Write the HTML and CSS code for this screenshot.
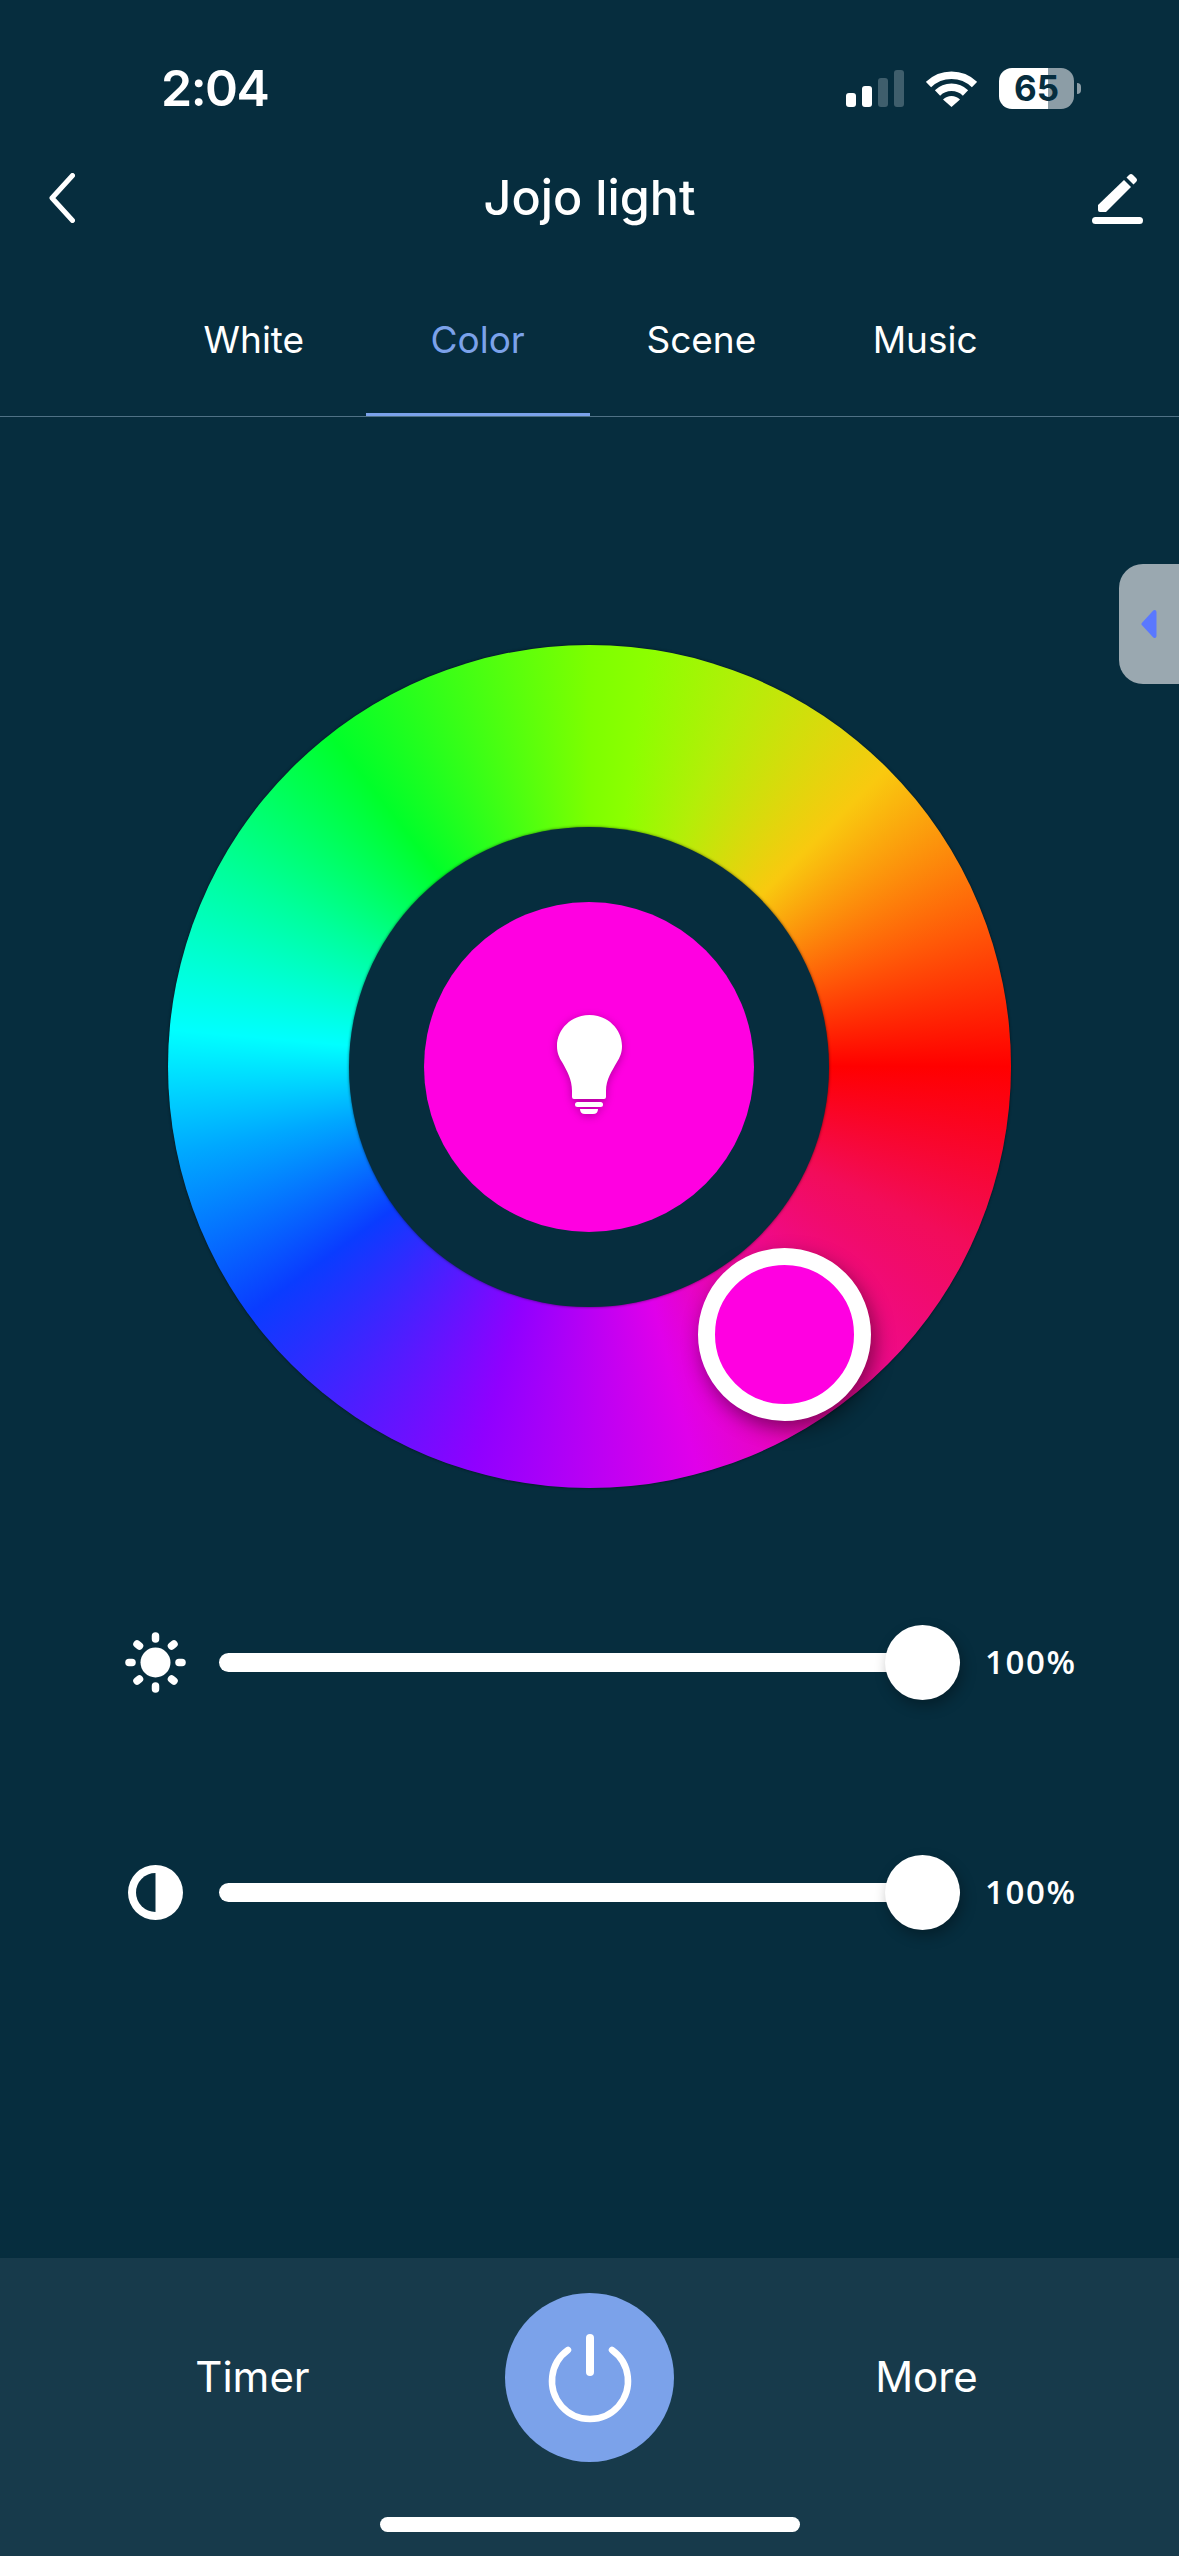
FILE: index.html
```html
<!DOCTYPE html>
<html lang="en">
<head>
    <meta charset="UTF-8">
    <meta name="viewport" content="width=device-width, initial-scale=1.0">
    <title>Jojo light</title>
    <link rel="stylesheet" href="styles.css">
</head>
<body>
    <div class="status-bar">
        <span class="time">2:04</span>
        <div class="status-icons">
            <div class="signal">
                <span class="bar bar-1"></span>
                <span class="bar bar-2"></span>
                <span class="bar bar-3"></span>
                <span class="bar bar-4"></span>
            </div>
            <svg class="wifi" width="51" height="37" viewBox="0 0 51 37">
                <path d="M2.5 14.5 A33 33 0 0 1 48.5 14.5" fill="none" stroke="#fff" stroke-width="7.5"/>
                <path d="M11.5 23 A20 20 0 0 1 39.5 23" fill="none" stroke="#fff" stroke-width="7.5"/>
                <path d="M17 29.5 A12 12 0 0 1 34 29.5 L25.5 37 Z" fill="#fff"/>
            </svg>
            <div class="battery">
                <div class="battery-body"><span class="battery-level">65</span></div>
                <span class="battery-cap"></span>
            </div>
        </div>
    </div>

    <div class="nav">
        <svg class="back" width="26" height="50" viewBox="0 0 26 50">
            <path d="M23.5 2.5 L3 25 L23.5 47.5" fill="none" stroke="#fff" stroke-width="5" stroke-linecap="round" stroke-linejoin="round"/>
        </svg>
        <h1 class="title">Jojo light</h1>
        <svg class="edit" width="51" height="51" viewBox="0 0 51 51">
            <path d="M6 32 L32 7 L39 14 L14 39 H8 Q6 39 6 37 Z" fill="#fff"/>
            <path d="M34.5 4.5 L37 2 Q39 0 41 2 L44 5 Q46 7 44 9 L41.5 11.5 Z" fill="#fff"/>
            <rect x="0" y="44" width="51" height="7" rx="3.5" fill="#fff"/>
        </svg>
    </div>

    <div class="tabs">
        <div class="tab">White</div>
        <div class="tab active">Color</div>
        <div class="tab">Scene</div>
        <div class="tab">Music</div>
    </div>

    <div class="content">
        <div class="side-tab">
            <svg width="16" height="30" viewBox="0 0 16 30">
                <path d="M13.5 3 L2.5 15 L13.5 27 Z" fill="#5a78ff" stroke="#5a78ff" stroke-width="4" stroke-linejoin="round"/>
            </svg>
        </div>

        <div class="wheel">
            <div class="wheel-hole">
                <div class="wheel-center">
                    <svg class="bulb" width="65" height="99" viewBox="0 0 65 99">
                        <path d="M32.5 0 C14.5 0 0 14 0 31 C0 38 2 42 5 47 C10 56 15 64 15 76 V82 Q15 84 17 84 H47 Q49 84 49 82 V76 C49 64 55 56 60 47 C63 42 65 38 65 31 C65 14 50.500 0 32.5 0 Z" fill="#fff"/>
                        <rect x="18" y="87" width="28" height="5" rx="2.5" fill="#fff"/>
                        <path d="M23 94 H41 Q41 99 36 99 H28 Q23 99 23 94 Z" fill="#fff"/>
                    </svg>
                </div>
            </div>
            <div class="wheel-handle"></div>
        </div>

        <div class="slider slider-brightness">
            <div class="slider-icon">
                <svg width="61" height="61" viewBox="0 0 61 61">
                    <circle cx="30.5" cy="30.5" r="15" fill="#fff"/>
                    <g stroke="#fff" stroke-width="7.500" stroke-linecap="round">
                        <path d="M30.500 4 V7"/>
                        <path d="M30.500 54 V57"/>
                        <path d="M4 30.500 H7"/>
                        <path d="M54 30.500 H57"/>
                        <path d="M12 12 L14.500 14"/>
                        <path d="M46.500 47 L49 49"/>
                        <path d="M12 49 L14.500 47"/>
                        <path d="M46.500 14 L49 12"/>
                    </g>
                </svg>
            </div>
            <div class="track"><span class="thumb"></span></div>
            <span class="slider-value">100%</span>
        </div>

        <div class="slider slider-contrast">
            <div class="slider-icon">
                <svg width="55" height="55" viewBox="0 0 55 55">
                    <circle cx="27.500" cy="27.500" r="27.500" fill="#fff"/>
                    <path d="M27.500 8 A19.500 19.500 0 0 0 27.500 47 Z" fill="#062d3e"/>
                </svg>
            </div>
            <div class="track"><span class="thumb"></span></div>
            <span class="slider-value">100%</span>
        </div>
    </div>

    <div class="bottom-bar">
        <div class="bottom-row">
            <span class="bottom-label">Timer</span>
            <div class="power">
                <svg width="96" height="96" viewBox="0 0 96 96">
                    <path d="M26 16 A38 38 0 1 0 70 16" fill="none" stroke="#fff" stroke-width="6.500" stroke-linecap="round"/>
                    <path d="M48 4 V38" fill="none" stroke="#fff" stroke-width="8" stroke-linecap="round"/>
                </svg>
            </div>
            <span class="bottom-label">More</span>
        </div>
        <div class="home-indicator"></div>
    </div>
</body>
</html>
```

FILE: styles.css
```css
* {
    box-sizing: border-box;
}
body {
    margin: 0;
    width: 1179px;
    height: 2556px;
    display: flex;
    flex-direction: column;
    overflow: hidden;
    background-color: #062d3e;
    color: #fff;
    font-family: Inter, "Liberation Sans", sans-serif;
}

/* status bar */
.status-bar {
    height: 140px;
    padding: 36px 98px 0 161px;
    display: flex;
    align-items: center;
    justify-content: space-between;
}
.time {
    font-size: 50px;
    font-weight: 600;
    letter-spacing: -1.5px;
    line-height: 1;
}
.status-icons {
    display: flex;
    align-items: center;
}
.signal {
    display: flex;
    align-items: flex-end;
    gap: 6px;
    height: 37px;
    margin-right: 22px;
}
.bar {
    width: 10px;
    border-radius: 3px;
    background-color: #fff;
}
.bar-1 {
    height: 14px;
}
.bar-2 {
    height: 21px;
}
.bar-3 {
    height: 29px;
    background-color: #3f5e6c;
}
.bar-4 {
    height: 37px;
    background-color: #3f5e6c;
}
.wifi {
    margin-right: 22px;
}
.battery {
    display: flex;
    align-items: center;
    gap: 3px;
}
.battery-body {
    width: 75px;
    height: 41px;
    border-radius: 13px;
    background: linear-gradient(90deg, #fff 65%, #8c9da6 65%);
    display: flex;
    align-items: center;
    justify-content: center;
}
.battery-level {
    color: #062d3e;
    font-size: 35px;
    font-weight: 700;
    line-height: 1;
}
.battery-cap {
    width: 4px;
    height: 11px;
    border-radius: 0 4px 4px 0;
    background-color: #8c9da6;
}

/* nav */
.nav {
    height: 116px;
    padding: 0 36px;
    display: grid;
    grid-template-columns: 1fr auto 1fr;
    align-items: center;
}
.back {
    margin-left: 13px;
}
.edit {
    justify-self: end;
}
.title {
    margin: 0;
    font-size: 48.5px;
    font-weight: 500;
    line-height: 1;
}

/* tabs */
.tabs {
    height: 161px;
    padding: 0 142px;
    display: flex;
    border-bottom: 1px solid #4f7185;
}
.tab {
    flex: 1;
    padding-top: 64px;
    text-align: center;
    font-size: 37px;
    line-height: 40px;
    border-bottom: 3px solid transparent;
}
.tab.active {
    color: #7ba2ea;
    border-bottom-color: #7ba2ea;
}

/* color wheel */
.content {
    position: relative;
    flex: 1;
    display: flex;
    flex-direction: column;
    padding-top: 228px;
}
.side-tab {
    position: absolute;
    top: 147px;
    right: 0;
    width: 60px;
    height: 120px;
    padding-left: 22px;
    display: flex;
    align-items: center;
    border-radius: 24px 0 0 24px;
    background-color: #9aa8b0;
}
.wheel {
    position: relative;
    width: 843px;
    height: 843px;
    align-self: center;
    display: flex;
    align-items: center;
    justify-content: center;
    border-radius: 50%;
    background: conic-gradient(#7dff00 0deg, #8cff00 8deg, #b4ee08 22deg, #f9c90f 45deg, #ff5a08 70deg, #ff0000 90deg, #f20c5a 115deg, #ee09a0 145deg, #e000ea 165deg, #9000ff 196deg, #0a3cff 234deg, #00a8ff 258deg, #00ffff 275deg, #00ff9c 298deg, #00ff2a 322deg, #7dff00 360deg);
    box-shadow: 0 0 3px rgba(0, 0, 0, 0.6);
}
.wheel-hole {
    width: 480px;
    height: 480px;
    margin-right: 1px;
    display: flex;
    align-items: center;
    justify-content: center;
    border-radius: 50%;
    background-color: #062d3e;
    box-shadow: 0 0 3px rgba(0, 0, 0, 0.6);
}
.wheel-center {
    width: 330px;
    height: 330px;
    padding-bottom: 4px;
    display: flex;
    align-items: center;
    justify-content: center;
    border-radius: 50%;
    background-color: #ff00e1;
}
.bulb {
    filter: drop-shadow(0 2px 4px rgba(80, 0, 70, 0.45));
}
.wheel-handle {
    position: absolute;
    left: 530px;
    top: 603px;
    width: 173px;
    height: 173px;
    border: 17px solid #fff;
    border-radius: 50%;
    background-color: #ff00e1;
    box-shadow: 4px 8px 20px rgba(0, 0, 0, 0.45);
}

/* sliders */
.slider {
    display: flex;
    align-items: center;
    height: 75px;
    padding-left: 125px;
}
.slider-brightness {
    margin-top: 137px;
}
.slider-contrast {
    margin-top: 155px;
}
.slider-icon {
    width: 61px;
    margin-right: 33px;
    display: flex;
    justify-content: center;
}
.slider-icon svg {
    display: block;
}
.track {
    position: relative;
    width: 741px;
    height: 19px;
    border-radius: 10px;
    background-color: #fff;
}
.thumb {
    position: absolute;
    top: -28px;
    right: 0;
    width: 75px;
    height: 75px;
    border-radius: 50%;
    background-color: #fff;
    box-shadow: 3px 6px 14px rgba(0, 0, 0, 0.3);
}
.slider-value {
    margin-left: 25px;
    margin-bottom: 3px;
    font-family: "Open Sans", sans-serif;
    font-size: 33px;
    font-weight: 600;
    letter-spacing: 1.6px;
    line-height: 1;
}

/* bottom bar */
.bottom-bar {
    height: 298px;
    padding-top: 35px;
    background-color: #173a4b;
}
.bottom-row {
    display: grid;
    grid-template-columns: 1fr 169px 1fr;
    align-items: center;
    height: 169px;
}
.bottom-label {
    margin-bottom: 2px;
    text-align: center;
    font-size: 42px;
    line-height: 1;
}
.power {
    width: 169px;
    height: 169px;
    padding-top: 8px;
    display: flex;
    align-items: center;
    justify-content: center;
    border-radius: 50%;
    background-color: #7ba2ea;
}
.home-indicator {
    width: 420px;
    height: 15px;
    margin: 55px auto 0;
    border-radius: 8px;
    background-color: #fff;
}
```
